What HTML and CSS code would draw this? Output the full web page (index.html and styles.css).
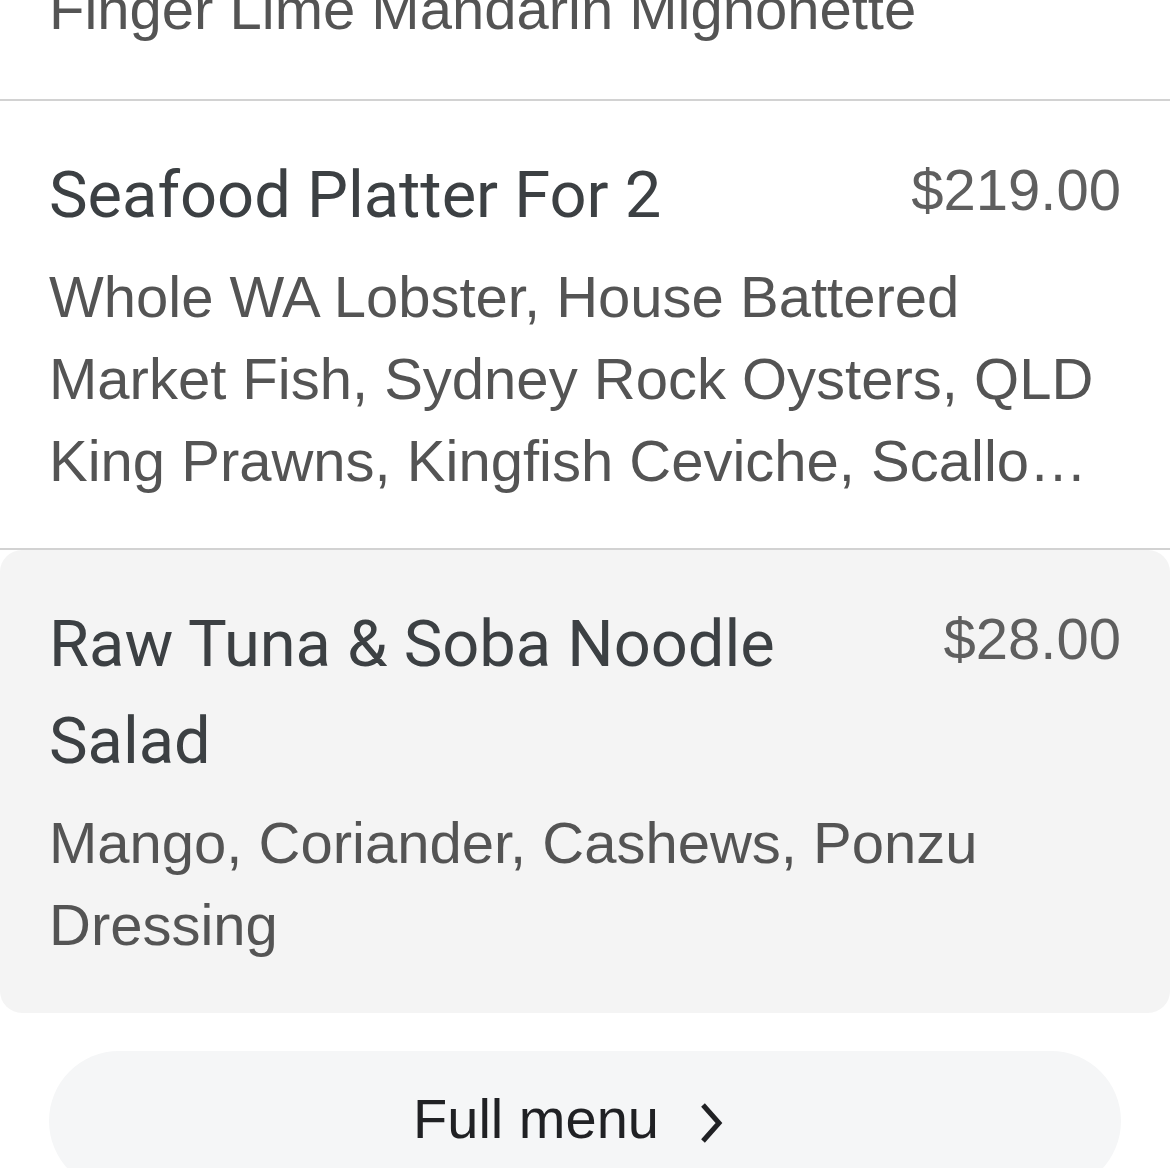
FILE: index.html
```html
<!DOCTYPE html>
<html lang="en">
<head>
    <meta charset="UTF-8">
    <meta name="viewport" content="width=device-width, initial-scale=1.0">
    <title>Menu</title>
    <link rel="stylesheet" href="styles.css">
</head>
<body>
    <main class="menu">
        <div class="menu-item prev-item">
            <p class="item-desc">Finger Lime Mandarin Mignonette</p>
        </div>

        <div class="menu-item">
            <div class="item-head">
                <h3 class="item-title">Seafood Platter For 2</h3>
                <span class="item-price">$219.00</span>
            </div>
            <p class="item-desc clamp">Whole WA Lobster, House Battered Market Fish, Sydney Rock Oysters, QLD King Prawns, Kingfish Ceviche, Scallops, Moreton Bay Bugs, Chips &amp; Salad</p>
        </div>

        <div class="menu-item highlighted">
            <div class="item-head">
                <h3 class="item-title">Raw Tuna &amp; Soba Noodle Salad</h3>
                <span class="item-price">$28.00</span>
            </div>
            <p class="item-desc">Mango, Coriander, Cashews, Ponzu Dressing</p>
        </div>

        <div class="menu-footer">
            <button type="button" class="full-menu">
                Full menu
                <svg class="chevron" width="26" height="44" viewBox="0 0 26 44">
                    <path d="M4 4 L20 22 L4 40" fill="none" stroke="#202124" stroke-width="5"/>
                </svg>
            </button>
        </div>
    </main>
</body>
</html>
```

FILE: styles.css
```css
body {
    margin: 0;
    padding: 0;
    background: #fff;
    font-family: 'Liberation Sans', Arial, sans-serif;
    overflow: hidden;
}

.menu {
    margin-top: -32px;
}

.menu-item {
    padding: 46px 49px 46px;
    border-bottom: 2px solid #d2d2d2;
}

.prev-item {
    padding-top: 0;
    padding-bottom: 49px;
}

.highlighted {
    background-color: #f4f4f4;
    border-bottom: none;
    border-radius: 22px;
    padding-bottom: 47px;
}

.item-head {
    display: flex;
    justify-content: space-between;
    align-items: flex-start;
    gap: 40px;
}

.item-title {
    margin: 0;
    font-family: Roboto, 'Liberation Sans', sans-serif;
    font-weight: 400;
    font-size: 65px;
    line-height: 97px;
    color: #3c4043;
}

.item-price {
    margin-top: 2px;
    font-size: 58px;
    line-height: 82px;
    color: #5f5f5f;
    white-space: nowrap;
}

.item-desc {
    margin: 12px 0 0;
    font-size: 58px;
    line-height: 82px;
    color: #545454;
}

.prev-item .item-desc {
    margin: 0;
}

.clamp {
    display: -webkit-box;
    -webkit-line-clamp: 3;
    -webkit-box-orient: vertical;
    overflow: hidden;
    padding-right: 10px;
}

.menu-footer {
    padding: 38px 49px 0;
}

.full-menu {
    width: 100%;
    height: 140px;
    border: none;
    border-radius: 70px;
    background-color: #f5f6f7;
    color: #202124;
    font-family: 'Liberation Sans', Arial, sans-serif;
    font-size: 56px;
    display: flex;
    align-items: center;
    justify-content: center;
    gap: 40px;
    padding: 0 32px 6px 0;
}

.chevron {
    display: block;
    margin-top: 10px;
}
```
